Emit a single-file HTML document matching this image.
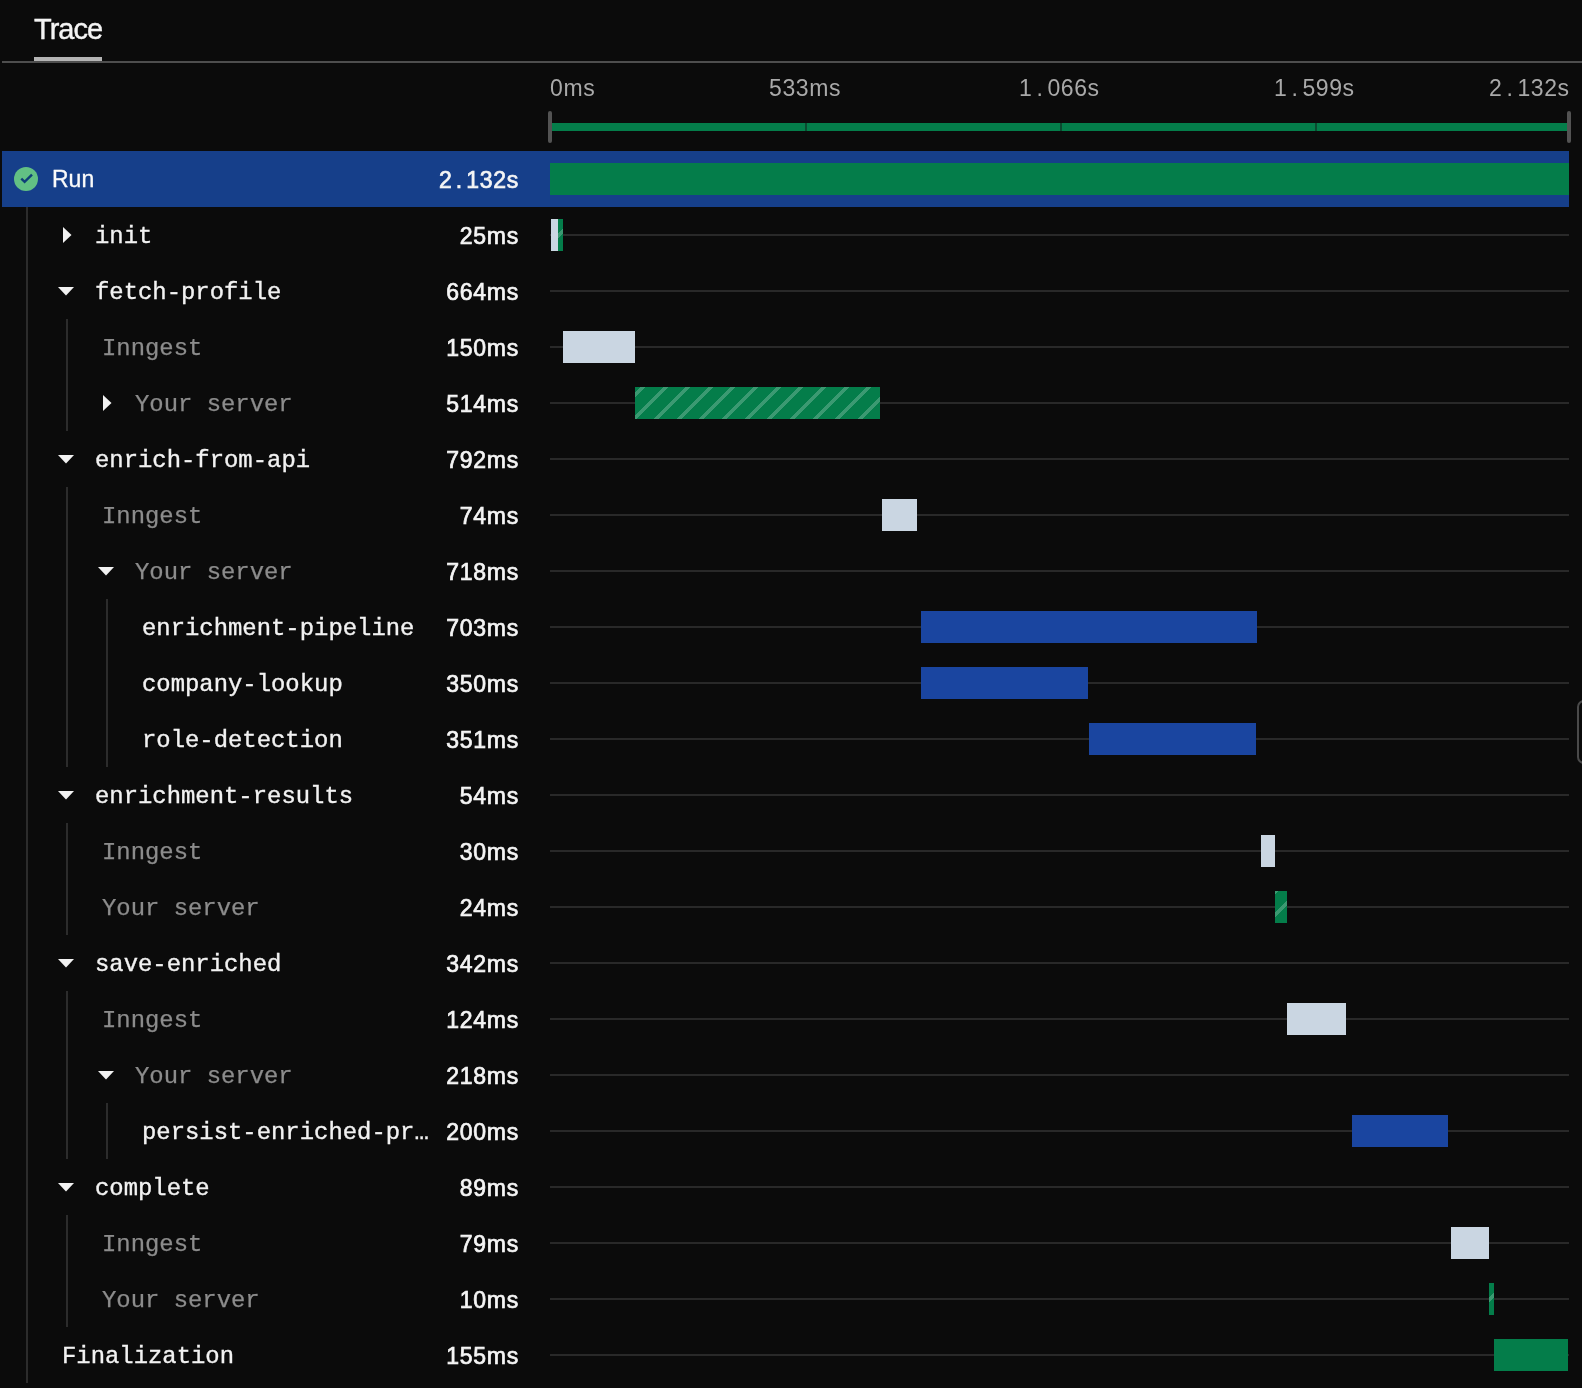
<!DOCTYPE html>
<html><head><meta charset="utf-8"><title>Trace</title>
<style>
*{box-sizing:border-box;margin:0;padding:0}
html,body{width:1582px;height:1388px;overflow:hidden;background:#0b0b0b}
body{position:relative;will-change:transform;font-family:"Liberation Sans",sans-serif;color:#f2f2f2}
.a{position:absolute}
.tab{left:34px;top:11px;font-size:29px;letter-spacing:-1px;-webkit-text-stroke:0.4px #f4f4f4;color:#f4f4f4;line-height:36px;white-space:nowrap}
.tabul{left:34px;top:57px;width:68px;height:4px;background:#b4b4b4}
.hdr{left:2px;top:61px;width:1580px;height:2px;background:#4e4e4e}
.tl{top:74px;font-size:23px;letter-spacing:0.6px;line-height:28px;color:#a9a9a9;white-space:nowrap}
.tick{top:111px;width:4px;height:32px;border-radius:2px;background:#535353}
.tbar{left:552px;top:123px;width:1015px;height:8px;background:#047d4a}
.itick{top:123px;width:2px;height:8px;background:#0b4a30}
.runrow{left:2px;top:151px;width:1567px;height:56px;background:#163f8a}
.runbar{left:550px;top:163px;width:1019px;height:32px;background:#047d4a}
.check{left:14px;top:167px;width:24px;height:24px}
.nm{font-family:"Liberation Mono",monospace;font-size:23.9px;line-height:30px;white-space:nowrap;color:#f2f2f2;-webkit-text-stroke:0.35px #f2f2f2}
.nm.gray{color:#8c8c8c;-webkit-text-stroke:0.25px #8c8c8c}
.rn{font-size:23px;line-height:30px;color:#fafafa;-webkit-text-stroke:0.3px #fafafa}
.dur{right:1063px;font-size:23px;letter-spacing:0.75px;font-weight:normal;-webkit-text-stroke:0.7px #f5f5f5;line-height:30px;white-space:nowrap;color:#f5f5f5;text-align:right}
.dot{margin:0 4px}
.dur .dot{margin:0 3.2px}
.hl{left:550px;width:1019px;height:2px;background:#292929}
.vl{width:2px;background:#2c2c2c}
.bar{height:32px}
.L{background:#cad6e2}
.B{background:#1a45a0}
.G{background:#047d4a}
.S{background:#047d4a repeating-linear-gradient(-45deg,transparent 0,transparent 12.5px,rgba(255,255,255,.22) 12.5px,rgba(255,255,255,.22) 16px)}
.tri{width:0;height:0}
.scroll{left:1577px;top:700px;width:20px;height:64px;border:2px solid #4a4a4a;border-radius:7px}
</style></head><body>

<div class="a tab">Trace</div>
<div class="a hdr"></div>
<div class="a tabul"></div>
<div class="a tl" style="left:550px">0ms</div>
<div class="a tl" style="left:769px">533ms</div>
<div class="a tl" style="left:1019px">1<span class="dot">.</span>066s</div>
<div class="a tl" style="left:1274px">1<span class="dot">.</span>599s</div>
<div class="a tl" style="left:1489px">2<span class="dot">.</span>132s</div>
<div class="a tbar"></div>
<div class="a itick" style="left:805px"></div>
<div class="a itick" style="left:1060px"></div>
<div class="a itick" style="left:1315px"></div>
<div class="a tick" style="left:548px"></div>
<div class="a tick" style="left:1567px"></div>
<div class="a runrow"></div>
<div class="a runbar"></div>
<svg class="a check" viewBox="0 0 24 24"><circle cx="12" cy="12" r="12" fill="#62c084"/><path d="M7.3 11.6L10.6 14.9L18 7.6" fill="none" stroke="#0f3f78" stroke-width="2.4" stroke-linecap="butt" stroke-linejoin="miter"/></svg>
<div class="a rn" style="left:52px;top:164px">Run</div>
<div class="a dur" style="top:164.5px">2<span class="dot">.</span>132s</div>
<div class="a hl" style="top:234px"></div>
<div class="a bar L" style="left:551px;top:219px;width:7px"></div>
<div class="a bar S" style="left:558px;top:219px;width:5px"></div>
<div class="a nm" style="left:95px;top:222px">init</div>
<svg class="a" style="left:63px;top:227px" width="9" height="16" viewBox="0 0 9 16"><path d="M0 0L8.5 8L0 16Z" fill="#f2f2f2"/></svg>
<div class="a dur" style="top:220.5px">25ms</div>
<div class="a hl" style="top:290px"></div>
<div class="a nm" style="left:95px;top:278px">fetch-profile</div>
<svg class="a" style="left:58px;top:287px" width="16" height="9" viewBox="0 0 16 9"><path d="M0 0L16 0L8 8.5Z" fill="#f2f2f2"/></svg>
<div class="a dur" style="top:276.5px">664ms</div>
<div class="a hl" style="top:346px"></div>
<div class="a bar L" style="left:563px;top:331px;width:72px"></div>
<div class="a nm gray" style="left:102px;top:334px">Inngest</div>
<div class="a dur" style="top:332.5px">150ms</div>
<div class="a hl" style="top:402px"></div>
<div class="a bar S" style="left:635px;top:387px;width:245px"></div>
<div class="a nm gray" style="left:135px;top:390px">Your server</div>
<svg class="a" style="left:103px;top:395px" width="9" height="16" viewBox="0 0 9 16"><path d="M0 0L8.5 8L0 16Z" fill="#f2f2f2"/></svg>
<div class="a dur" style="top:388.5px">514ms</div>
<div class="a hl" style="top:458px"></div>
<div class="a nm" style="left:95px;top:446px">enrich-from-api</div>
<svg class="a" style="left:58px;top:455px" width="16" height="9" viewBox="0 0 16 9"><path d="M0 0L16 0L8 8.5Z" fill="#f2f2f2"/></svg>
<div class="a dur" style="top:444.5px">792ms</div>
<div class="a hl" style="top:514px"></div>
<div class="a bar L" style="left:882px;top:499px;width:35px"></div>
<div class="a nm gray" style="left:102px;top:502px">Inngest</div>
<div class="a dur" style="top:500.5px">74ms</div>
<div class="a hl" style="top:570px"></div>
<div class="a nm gray" style="left:135px;top:558px">Your server</div>
<svg class="a" style="left:98px;top:567px" width="16" height="9" viewBox="0 0 16 9"><path d="M0 0L16 0L8 8.5Z" fill="#f2f2f2"/></svg>
<div class="a dur" style="top:556.5px">718ms</div>
<div class="a hl" style="top:626px"></div>
<div class="a bar B" style="left:921px;top:611px;width:336px"></div>
<div class="a nm" style="left:142px;top:614px">enrichment-pipeline</div>
<div class="a dur" style="top:612.5px">703ms</div>
<div class="a hl" style="top:682px"></div>
<div class="a bar B" style="left:921px;top:667px;width:167px"></div>
<div class="a nm" style="left:142px;top:670px">company-lookup</div>
<div class="a dur" style="top:668.5px">350ms</div>
<div class="a hl" style="top:738px"></div>
<div class="a bar B" style="left:1089px;top:723px;width:167px"></div>
<div class="a nm" style="left:142px;top:726px">role-detection</div>
<div class="a dur" style="top:724.5px">351ms</div>
<div class="a hl" style="top:794px"></div>
<div class="a nm" style="left:95px;top:782px">enrichment-results</div>
<svg class="a" style="left:58px;top:791px" width="16" height="9" viewBox="0 0 16 9"><path d="M0 0L16 0L8 8.5Z" fill="#f2f2f2"/></svg>
<div class="a dur" style="top:780.5px">54ms</div>
<div class="a hl" style="top:850px"></div>
<div class="a bar L" style="left:1261px;top:835px;width:14px"></div>
<div class="a nm gray" style="left:102px;top:838px">Inngest</div>
<div class="a dur" style="top:836.5px">30ms</div>
<div class="a hl" style="top:906px"></div>
<div class="a bar S" style="left:1275px;top:891px;width:12px"></div>
<div class="a nm gray" style="left:102px;top:894px">Your server</div>
<div class="a dur" style="top:892.5px">24ms</div>
<div class="a hl" style="top:962px"></div>
<div class="a nm" style="left:95px;top:950px">save-enriched</div>
<svg class="a" style="left:58px;top:959px" width="16" height="9" viewBox="0 0 16 9"><path d="M0 0L16 0L8 8.5Z" fill="#f2f2f2"/></svg>
<div class="a dur" style="top:948.5px">342ms</div>
<div class="a hl" style="top:1018px"></div>
<div class="a bar L" style="left:1287px;top:1003px;width:59px"></div>
<div class="a nm gray" style="left:102px;top:1006px">Inngest</div>
<div class="a dur" style="top:1004.5px">124ms</div>
<div class="a hl" style="top:1074px"></div>
<div class="a nm gray" style="left:135px;top:1062px">Your server</div>
<svg class="a" style="left:98px;top:1071px" width="16" height="9" viewBox="0 0 16 9"><path d="M0 0L16 0L8 8.5Z" fill="#f2f2f2"/></svg>
<div class="a dur" style="top:1060.5px">218ms</div>
<div class="a hl" style="top:1130px"></div>
<div class="a bar B" style="left:1352px;top:1115px;width:96px"></div>
<div class="a nm" style="left:142px;top:1118px">persist-enriched-pr…</div>
<div class="a dur" style="top:1116.5px">200ms</div>
<div class="a hl" style="top:1186px"></div>
<div class="a nm" style="left:95px;top:1174px">complete</div>
<svg class="a" style="left:58px;top:1183px" width="16" height="9" viewBox="0 0 16 9"><path d="M0 0L16 0L8 8.5Z" fill="#f2f2f2"/></svg>
<div class="a dur" style="top:1172.5px">89ms</div>
<div class="a hl" style="top:1242px"></div>
<div class="a bar L" style="left:1451px;top:1227px;width:38px"></div>
<div class="a nm gray" style="left:102px;top:1230px">Inngest</div>
<div class="a dur" style="top:1228.5px">79ms</div>
<div class="a hl" style="top:1298px"></div>
<div class="a bar S" style="left:1489px;top:1283px;width:5px"></div>
<div class="a nm gray" style="left:102px;top:1286px">Your server</div>
<div class="a dur" style="top:1284.5px">10ms</div>
<div class="a hl" style="top:1354px"></div>
<div class="a bar G" style="left:1494px;top:1339px;width:74px"></div>
<div class="a nm" style="left:62px;top:1342px">Finalization</div>
<div class="a dur" style="top:1340.5px">155ms</div>
<div class="a vl" style="left:26px;top:207px;height:1176px"></div>
<div class="a vl" style="left:66px;top:319px;height:112px"></div>
<div class="a vl" style="left:66px;top:487px;height:280px"></div>
<div class="a vl" style="left:106px;top:599px;height:168px"></div>
<div class="a vl" style="left:66px;top:823px;height:112px"></div>
<div class="a vl" style="left:66px;top:991px;height:168px"></div>
<div class="a vl" style="left:106px;top:1103px;height:56px"></div>
<div class="a vl" style="left:66px;top:1215px;height:112px"></div>
<div class="a scroll"></div>
</body></html>
